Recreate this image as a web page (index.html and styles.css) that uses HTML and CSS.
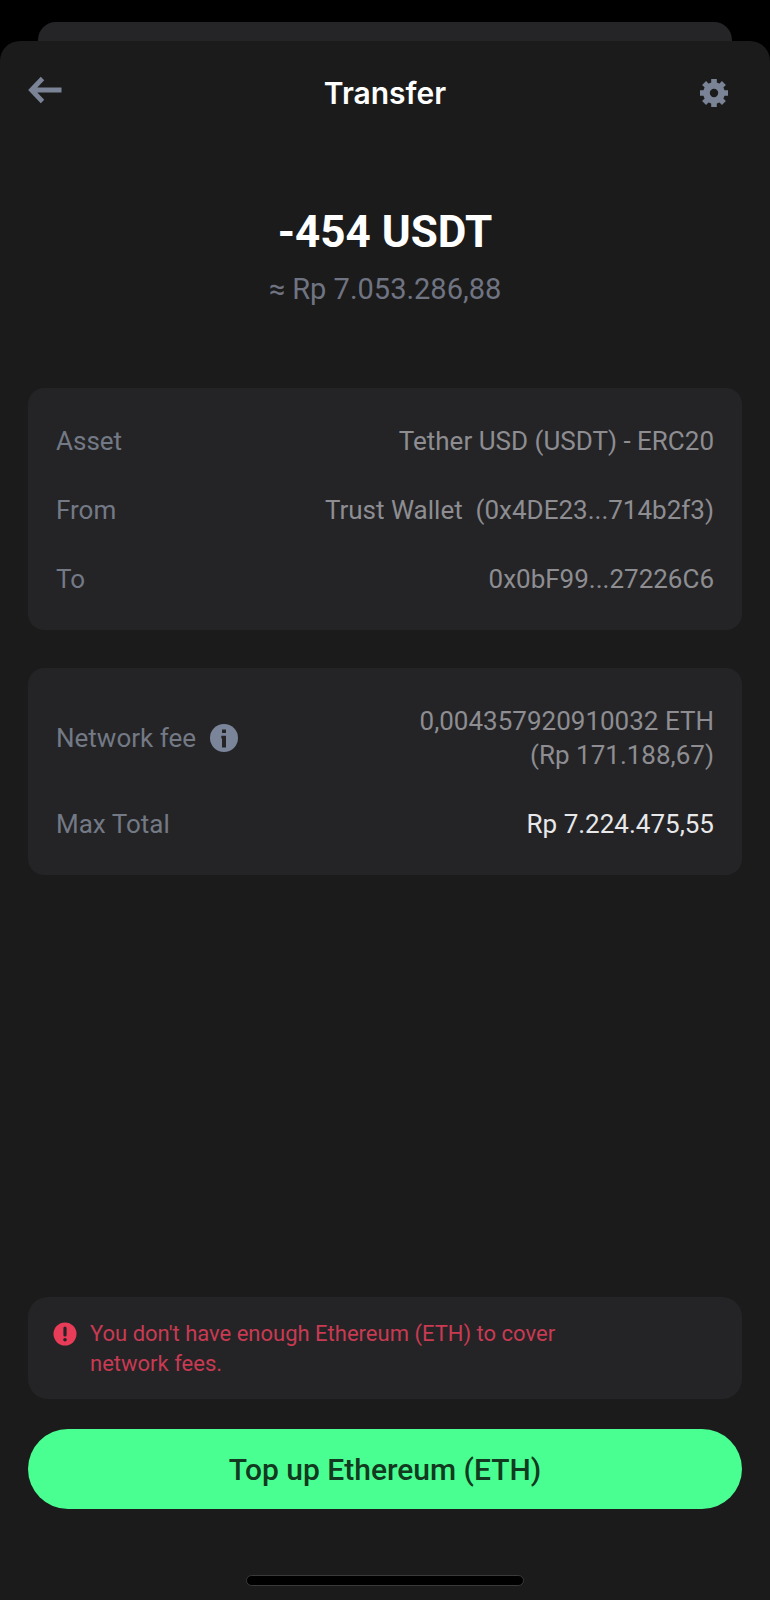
FILE: index.html
```html
<!DOCTYPE html>
<html lang="en">
<head>
<meta charset="utf-8">
<meta name="viewport" content="width=device-width, initial-scale=1">
<title>Transfer</title>
<link rel="stylesheet" href="styles.css">
</head>
<body>
<div class="backdrop"></div>
<main class="sheet">
  <header class="header">
    <button class="icon-button" type="button" aria-label="Back">
      <svg class="icon-back" viewBox="0 0 34 28" aria-hidden="true"><path d="M14.500 2.500 3.500 14l11 11.500M3.500 14H33.500" fill="none" stroke="currentColor" stroke-width="4.800"/></svg>
    </button>
    <h1 class="title">Transfer</h1>
    <button class="icon-button icon-button-end" type="button" aria-label="Settings">
      <svg class="icon-gear" viewBox="-14 -14 28 28" aria-hidden="true">
        <circle r="7.500" fill="none" stroke="currentColor" stroke-width="6.600"/>
        <g fill="currentColor">
          <path d="M-2.800-14h5.600v5h-5.600zM-2.800 9h5.600v5h-5.600zM-14-2.800h5v5.600h-5zM9-2.800h5v5.600H9z"/>
          <path transform="rotate(45)" d="M-2.800-14h5.600v5h-5.600zM-2.800 9h5.600v5h-5.600zM-14-2.800h5v5.600h-5zM9-2.800h5v5.600H9z"/>
        </g>
      </svg>
    </button>
  </header>

  <section class="summary">
    <p class="amount">-454 USDT</p>
    <p class="fiat">≈ Rp 7.053.286,88</p>
  </section>

  <dl class="card">
    <div class="row"><dt>Asset</dt><dd>Tether USD (USDT) - ERC20</dd></div>
    <div class="row"><dt>From</dt><dd>Trust Wallet&nbsp; (0x4DE23...714b2f3)</dd></div>
    <div class="row"><dt>To</dt><dd>0x0bF99...27226C6</dd></div>
  </dl>

  <dl class="card">
    <div class="row">
      <dt class="fee-label">Network fee
        <button class="info" type="button" aria-label="About network fee">
          <svg class="icon-info" viewBox="0 0 28 28" aria-hidden="true"><circle cx="14" cy="14" r="14" fill="#7a8599"/><path fill="#242426" d="M12 5.500h4v3.600h-4zM11.300 11.800H16v11.700h-4v-9h-.7z"/></svg>
        </button>
      </dt>
      <dd>0,004357920910032 ETH<br>(Rp 171.188,67)</dd>
    </div>
    <div class="row"><dt>Max Total</dt><dd class="total">Rp 7.224.475,55</dd></div>
  </dl>

  <footer class="footer">
    <div class="alert" role="alert">
      <svg class="icon-alert" viewBox="0 0 24 24" aria-hidden="true"><circle cx="12" cy="12" r="11.500" fill="#e93c58"/><path d="M12 6v7" stroke="#242426" stroke-width="3.200" stroke-linecap="round"/><circle cx="12" cy="17.800" r="1.800" fill="#242426"/></svg>
      <p class="alert-text">You don't have enough Ethereum (ETH) to cover network fees.</p>
    </div>
    <button class="primary" type="button">Top up Ethereum (ETH)</button>
    <div class="home-indicator"></div>
  </footer>
</main>
</body>
</html>
```
FILE: styles.css
```css
* {
  box-sizing: border-box;
}

body {
  margin: 0;
  min-height: 100vh;
  padding-top: 22px;
  display: flex;
  flex-direction: column;
  background: #000;
  color: #fff;
  font-family: Roboto, "Liberation Sans", sans-serif;
}

h1, p, dl, dd {
  margin: 0;
}

button {
  border: 0;
  padding: 0;
  background: none;
  color: inherit;
  font: inherit;
  cursor: pointer;
}

svg {
  display: block;
}

.backdrop {
  height: 19px;
  margin: 0 38px;
  border-radius: 18px 18px 0 0;
  background: #252527;
}

.sheet {
  flex: 1;
  display: flex;
  flex-direction: column;
  padding: 32px 28px 14px;
  border-radius: 20px 20px 0 0;
  background: #1b1b1b;
}

.header {
  display: grid;
  grid-template-columns: 1fr auto 1fr;
  align-items: center;
  color: #7a8496;
}

.icon-button {
  justify-self: start;
  padding-bottom: 6px;
}

.icon-button-end {
  justify-self: end;
  padding: 0 14px 0 0;
}

.icon-back {
  width: 34px;
  height: 28px;
}

.icon-gear,
.icon-info {
  width: 28px;
  height: 28px;
}

.title {
  color: #fff;
  font-family: Inter, sans-serif;
  font-size: 30px;
  font-weight: 600;
  line-height: 40px;
}

.summary {
  padding: 89px 0 80px;
  text-align: center;
}

.amount {
  font-size: 44px;
  font-weight: 700;
  line-height: 60px;
}

.fiat {
  padding-top: 8px;
  color: #707482;
  font-size: 29px;
  line-height: 38px;
}

.card {
  display: flex;
  flex-direction: column;
  gap: 35px;
  margin-bottom: 38px;
  padding: 36px 28px 34px;
  border-radius: 16px;
  background: #242426;
  font-size: 26px;
  line-height: 34px;
}

.row {
  display: flex;
  align-items: center;
  justify-content: space-between;
  gap: 20px;
  color: #737985;
}

.row dd {
  color: #8d8d92;
  text-align: right;
}

.row .total {
  color: #e8e8ea;
}

.fee-label {
  display: flex;
  align-items: center;
  gap: 14px;
}

.footer {
  display: flex;
  flex-direction: column;
  margin-top: auto;
}

.alert {
  display: flex;
  gap: 13px;
  margin-bottom: 30px;
  padding: 22px 160px 20px 25px;
  border-radius: 20px;
  background: #242426;
  color: #c93a53;
}

.icon-alert {
  flex: none;
  width: 24px;
  height: 24px;
  margin-top: 3px;
}

.alert-text {
  font-size: 22px;
  line-height: 30px;
}

.primary {
  height: 80px;
  border-radius: 40px;
  background: #4aff91;
  color: #123a20;
  font-size: 30px;
  font-weight: 500;
}

.home-indicator {
  align-self: center;
  width: 278px;
  height: 11px;
  margin-top: 66px;
  border: 1px solid #3a3a3a;
  border-radius: 6px;
  background: #000;
}
```
